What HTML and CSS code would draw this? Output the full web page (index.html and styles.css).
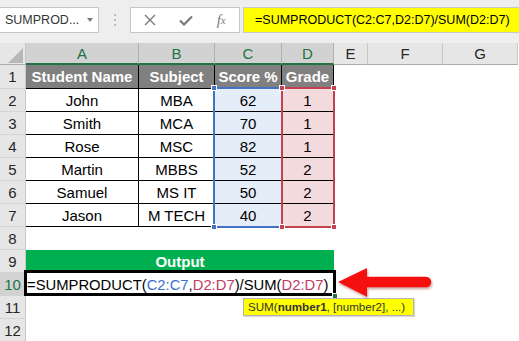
FILE: index.html
```html
<!DOCTYPE html>
<html lang="en">

<head>
    <meta charset="UTF-8">
    <title>SUMPRODUCT weighted average</title>
    <link rel="stylesheet" href="styles.css">
</head>

<body>
    <div class="app">
        <!-- formula bar -->
        <div class="formula-bar">
            <div class="name-box">
                <span>SUMPROD...</span>
                <span class="caret"></span>
            </div>
            <div class="grip"><i></i><i></i><i></i></div>
            <div class="fx-buttons">
                <span class="fx-btn">
                    <svg width="12" height="12" viewBox="0 0 12 12">
                        <path d="M1 1 L11 11 M11 1 L1 11" stroke="#7a7a7a" stroke-width="1.4" fill="none" />
                    </svg>
                </span>
                <span class="fx-btn">
                    <svg width="14" height="11" viewBox="0 0 14 11">
                        <path d="M1 5.5 L5 9.5 L13 1.5" stroke="#7a7a7a" stroke-width="2.2" fill="none" />
                    </svg>
                </span>
                <span class="fx-btn fx">f<small>x</small></span>
            </div>
            <div class="formula-input">=SUMPRODUCT(C2:C7,D2:D7)/SUM(D2:D7)</div>
        </div>

        <!-- sheet -->
        <div class="sheet">
            <div class="row cols">
                <div class="corner"><span class="tri"></span></div>
                <div class="col-head sel">A</div>
                <div class="col-head sel">B</div>
                <div class="col-head sel">C</div>
                <div class="col-head sel">D</div>
                <div class="col-head">E</div>
                <div class="col-head">F</div>
                <div class="col-head">G</div>
            </div>

            <div class="row first">
                <div class="row-head">1</div>
                <div class="cell t th">Student Name</div>
                <div class="cell t th">Subject</div>
                <div class="cell t th">Score %</div>
                <div class="cell t th">Grade</div>
            </div>
            <div class="row">
                <div class="row-head">2</div>
                <div class="cell t">John</div>
                <div class="cell t">MBA</div>
                <div class="cell t blue">62</div>
                <div class="cell t pink">1</div>
            </div>
            <div class="row">
                <div class="row-head">3</div>
                <div class="cell t">Smith</div>
                <div class="cell t">MCA</div>
                <div class="cell t blue">70</div>
                <div class="cell t pink">1</div>
            </div>
            <div class="row">
                <div class="row-head">4</div>
                <div class="cell t">Rose</div>
                <div class="cell t">MSC</div>
                <div class="cell t blue">82</div>
                <div class="cell t pink">1</div>
            </div>
            <div class="row">
                <div class="row-head">5</div>
                <div class="cell t">Martin</div>
                <div class="cell t">MBBS</div>
                <div class="cell t blue">52</div>
                <div class="cell t pink">2</div>
            </div>
            <div class="row">
                <div class="row-head">6</div>
                <div class="cell t">Samuel</div>
                <div class="cell t">MS IT</div>
                <div class="cell t blue">50</div>
                <div class="cell t pink">2</div>
            </div>
            <div class="row">
                <div class="row-head">7</div>
                <div class="cell t">Jason</div>
                <div class="cell t">M TECH</div>
                <div class="cell t blue">40</div>
                <div class="cell t pink">2</div>
            </div>
            <div class="row">
                <div class="row-head">8</div>
            </div>
            <div class="row">
                <div class="row-head">9</div>
                <div class="cell output">Output</div>
            </div>
            <div class="row">
                <div class="row-head sel">10</div>
                <div class="cell editing">=SUMPRODUCT(<span class="ref-c">C2:C7</span>,<span class="ref-d">D2:D7</span>)/SUM(<span class="ref-d">D2:D7</span>)</div>
            </div>
            <div class="row">
                <div class="row-head">11</div>
            </div>
            <div class="row">
                <div class="row-head">12</div>
            </div>

            <!-- range finder borders -->
            <div class="range range-c"></div>
            <div class="range range-d"></div>
            <span class="handle blue-h h1"></span>
            <span class="handle blue-h h2"></span>
            <span class="handle red-h h3"></span>
            <span class="handle red-h h4"></span>
            <span class="handle red-h h5"></span>
            <span class="handle red-h h6"></span>

            <!-- active cell -->
            <div class="active-box"></div>
            <span class="fill-handle"></span>

            <div class="tooltip">SUM(<b>number1</b>, [number2], ...)</div>

            <svg class="arrow" width="100" height="38" viewBox="0 0 100 38">
                <path d="M2 18 L31 4 L31 12.7 L90 12.7 A5.3 5.3 0 0 1 90 23.3 L31 23.3 L31 32.7 Z" fill="#f50f0f" />
            </svg>
        </div>
    </div>
</body>

</html>
```

FILE: styles.css
```css
* {
    box-sizing: border-box;
}

body {
    margin: 0;
    font-family: "Liberation Sans", Arial, sans-serif;
    background: #fff;
    color: #000;
}

.app {
    width: 519px;
    height: 341px;
    overflow: hidden;
}

/* formula bar */
.formula-bar {
    height: 43px;
    background: #eeeeee;
    display: flex;
    align-items: flex-start;
    padding-top: 7px;
}

.name-box {
    width: 100px;
    height: 26px;
    margin-left: -1px;
    background: #fff;
    border: 1px solid #c6c6c6;
    display: flex;
    align-items: center;
    padding-left: 5px;
    font-size: 12.5px;
    color: #333;
}

.caret {
    margin-left: auto;
    margin-right: 5px;
    border-top: 4px solid #7a7a7a;
    border-left: 3px solid transparent;
    border-right: 3px solid transparent;
}

.grip {
    width: 31px;
    height: 26px;
    display: flex;
    flex-direction: column;
    align-items: center;
    justify-content: center;
    gap: 3px;
}

.grip i {
    width: 2px;
    height: 2px;
    background: #bdbdbd;
}

.fx-buttons {
    width: 110px;
    height: 26px;
    background: #fff;
    border: 1px solid #c6c6c6;
    display: flex;
    align-items: center;
    padding-left: 1px;
}

.fx-btn {
    width: 36px;
    display: flex;
    justify-content: center;
    align-items: center;
}

.fx {
    font-family: "Liberation Serif", serif;
    font-style: italic;
    font-size: 15px;
    color: #7a7a7a;
}

.fx small {
    font-size: 11px;
}

.formula-input {
    flex: 1;
    height: 26px;
    margin-left: 3px;
    background: #ffff00;
    border: 1px solid #c8c8c8;
    border-right: none;
    padding-left: 11px;
    display: flex;
    align-items: center;
    font-size: 12.5px;
    white-space: nowrap;
}

/* sheet */
.sheet {
    position: relative;
    height: 298px;
}

.row {
    display: grid;
    grid-template-columns: 26px 113px 76px 67px 52px 34px 75px 75px;
    height: 23px;
}

.row.cols {
    height: 22px;
}

.row.first {
    height: 24px;
}

.corner {
    background: #e6e6e6;
    border-right: 1px solid #c8c8c8;
    border-bottom: 1px solid #ababab;
    display: flex;
    align-items: flex-end;
    justify-content: flex-end;
    padding: 0 2px 1px 0;
}

.tri {
    width: 0;
    height: 0;
    border-left: 15px solid transparent;
    border-bottom: 15px solid #b7b7b7;
}

.col-head {
    background: #e6e6e6;
    border-right: 1px solid #c8c8c8;
    border-bottom: 1px solid #ababab;
    display: flex;
    align-items: center;
    justify-content: center;
    font-size: 15px;
    color: #262626;
}

.col-head.sel {
    background: #d2d2d2;
    border-right-color: #b0b0b0;
    color: #217346;
    border-bottom: 2px solid #217346;
}

.row-head {
    background: #e6e6e6;
    border-right: 1px solid #c8c8c8;
    border-bottom: 1px solid #d4d4d4;
    display: flex;
    align-items: center;
    justify-content: center;
    font-size: 15px;
    color: #262626;
}

.row-head.sel {
    background: #d2d2d2;
    color: #217346;
}

.cell {
    display: flex;
    align-items: center;
    justify-content: center;
    font-size: 15px;
    white-space: nowrap;
}

.t {
    border-right: 1px solid #000;
    border-bottom: 1px solid #000;
}

.th {
    background: #808080;
    color: #fff;
    font-weight: bold;
}

.blue {
    background: #e5edf8;
}

.pink {
    background: #f3dadd;
}

.output {
    grid-column: 2 / 6;
    background: #00b050;
    color: #fff;
    font-weight: bold;
}

.editing {
    grid-column: 2 / 6;
    justify-content: flex-start;
    padding-left: 1px;
    font-size: 14.8px;
}

.ref-c {
    color: #3b6fd0;
}

.ref-d {
    color: #c23b66;
}

/* overlays */
.range {
    position: absolute;
    top: 44px;
    height: 141px;
    border: 2px solid;
}

.range-c {
    left: 213px;
    width: 70px;
    border-color: #4472c4;
}

.range-d {
    left: 281px;
    width: 54px;
    border-color: #c4414f;
}

.handle {
    position: absolute;
    width: 6px;
    height: 6px;
    border: 1px solid #fff;
}

.blue-h {
    background: #4472c4;
}

.red-h {
    background: #c4414f;
}

.h1 { left: 211px; top: 42px; }
.h2 { left: 211px; top: 181px; }
.h3 { left: 279px; top: 42px; }
.h4 { left: 331px; top: 42px; }
.h5 { left: 279px; top: 181px; }
.h6 { left: 331px; top: 181px; }

.active-box {
    position: absolute;
    left: 24px;
    top: 227px;
    width: 312px;
    height: 26px;
    border: 3px solid #000;
}

.fill-handle {
    position: absolute;
    left: 332px;
    top: 250px;
    width: 6px;
    height: 6px;
    background: #217346;
    border: 1px solid #fff;
}

.tooltip {
    position: absolute;
    left: 243px;
    top: 255px;
    width: 171px;
    height: 18px;
    background: #ffff00;
    border: 1px solid #b4b4b4;
    padding-left: 4px;
    font-size: 11.6px;
    line-height: 16px;
    color: #333;
    white-space: nowrap;
    box-shadow: 1px 1px 1px rgba(0, 0, 0, 0.15);
}

.arrow {
    position: absolute;
    left: 336px;
    top: 221px;
    filter: drop-shadow(1px 2px 1px rgba(120, 0, 0, 0.35));
}
```
